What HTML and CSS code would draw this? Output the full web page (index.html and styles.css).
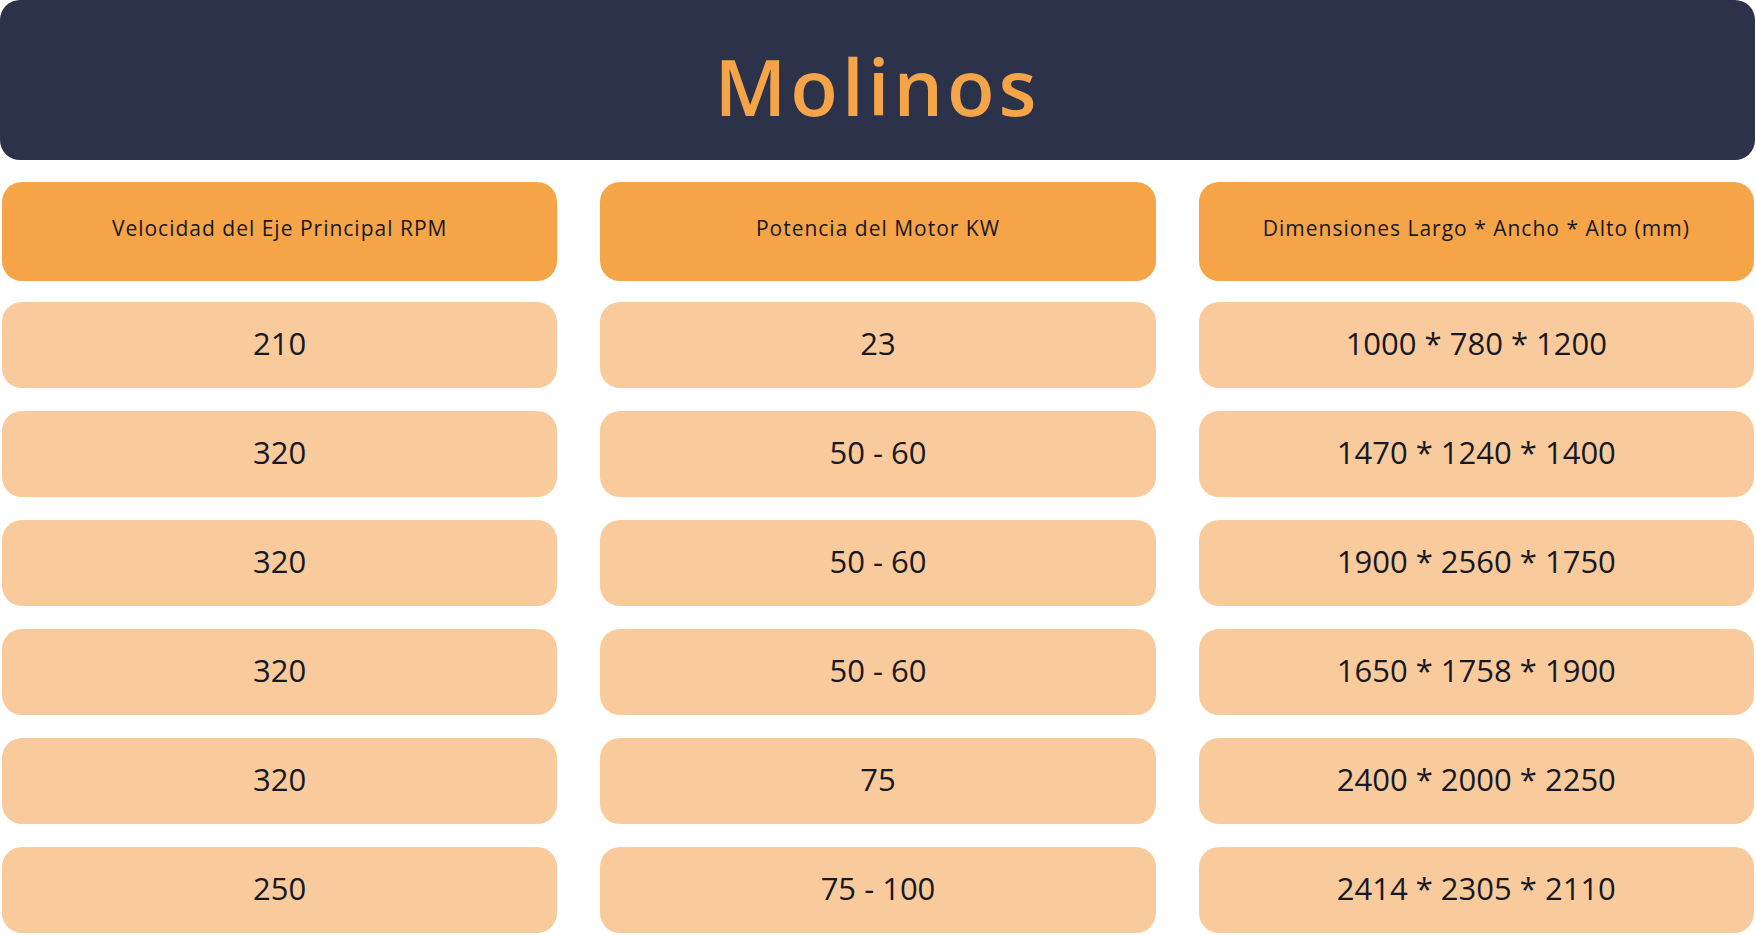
FILE: index.html
```html
<!DOCTYPE html>
<html lang="es">
<head>
<meta charset="utf-8">
<title>Molinos</title>
<link rel="stylesheet" href="styles.css">
</head>
<body>
<div class="page">
  <header class="banner"><h1 class="title">Molinos</h1></header>
  <div class="table">
    <div class="cell head">Velocidad del Eje Principal RPM</div>
    <div class="cell head">Potencia del Motor KW</div>
    <div class="cell head">Dimensiones Largo * Ancho * Alto (mm)</div>

    <div class="cell">210</div>
    <div class="cell">23</div>
    <div class="cell">1000 * 780 * 1200</div>

    <div class="cell">320</div>
    <div class="cell">50 - 60</div>
    <div class="cell">1470 * 1240 * 1400</div>

    <div class="cell">320</div>
    <div class="cell">50 - 60</div>
    <div class="cell">1900 * 2560 * 1750</div>

    <div class="cell">320</div>
    <div class="cell">50 - 60</div>
    <div class="cell">1650 * 1758 * 1900</div>

    <div class="cell">320</div>
    <div class="cell">75</div>
    <div class="cell">2400 * 2000 * 2250</div>

    <div class="cell">250</div>
    <div class="cell">75 - 100</div>
    <div class="cell">2414 * 2305 * 2110</div>
  </div>
</div>
</body>
</html>
```
FILE: styles.css
```css
html, body {
  margin: 0;
  padding: 0;
  background: #ffffff;
}
body {
  font-family: "Open Sans", "Noto Sans", sans-serif;
  color: #161824;
}
.page {
  width: 1756px;
  height: 935px;
  overflow: hidden;
}
.banner {
  margin: 0 1px 0 0;
  height: 160px;
  background: #2b324a;
  border-radius: 20px;
  display: flex;
  align-items: center;
  justify-content: center;
}
.title {
  margin: 12px 0 0 0;
  font-size: 78px;
  font-weight: 600;
  color: #f6a448;
  letter-spacing: 4px;
  line-height: 1;
}
.table {
  margin-top: 22px;
  padding: 0 2px 0 2px;
  display: grid;
  grid-template-columns: repeat(3, 1fr);
  grid-template-rows: 97px repeat(6, 86px);
  column-gap: 43px;
  row-gap: 23px;
}
.cell {
  background: #f9cb9c;
  border-radius: 20px;
  display: flex;
  align-items: center;
  justify-content: center;
  font-size: 31px;
  font-weight: 400;
  line-height: 1;
  padding-bottom: 4px;
  box-sizing: border-box;
}
.cell.head {
  background: #f6a448;
  font-size: 21px;
  letter-spacing: 1px;
  margin-bottom: -2px;
  padding-bottom: 6px;
}
```
